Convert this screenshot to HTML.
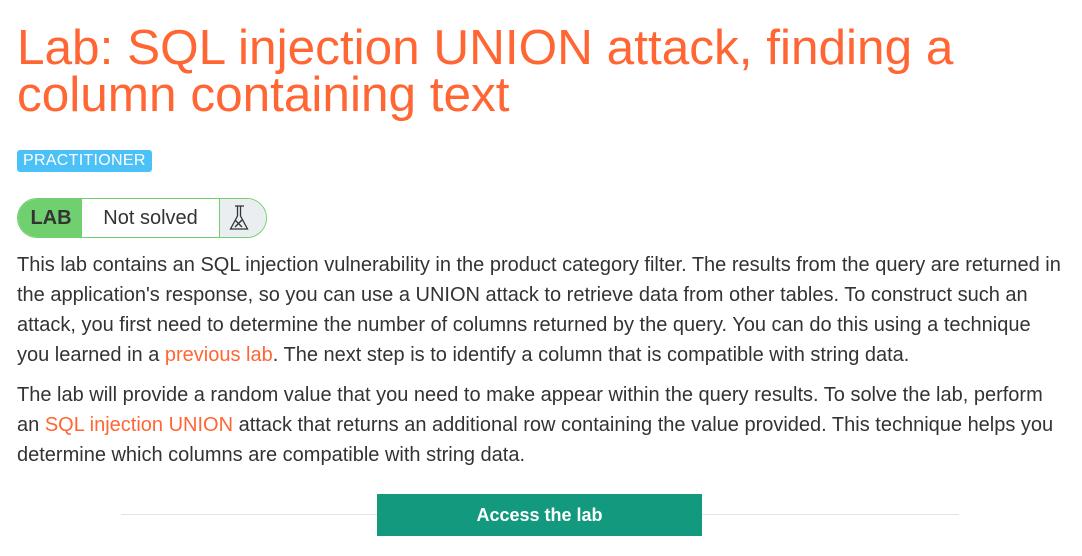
<!DOCTYPE html>
<html><head><style>
body{margin:0;background:#fff;font-family:"Liberation Sans",Arial,sans-serif;width:1082px;height:556px;overflow:hidden;position:relative}
h1{position:absolute;left:17px;top:24px;margin:0;font-weight:normal;color:#ff6633;font-size:49.5px;line-height:47px;width:1000px}
.badge{position:absolute;left:17px;top:150px;background:#4cc1f7;color:#fff;font-size:16px;line-height:22px;padding:0 6px;border-radius:3px;letter-spacing:0.3px}
.lab{position:absolute;left:17px;top:198px;width:248px;height:38px;border:1px solid #70d070;border-radius:20px;overflow:hidden;display:flex;font-size:20px}
.lab .l{background:#70d070;color:#333;font-weight:bold;width:63px;text-align:center;line-height:38px;padding-left:2px}
.lab .m{width:139px;text-align:center;line-height:38px;color:#333;border-right:1px solid #70d070}
.lab .r{flex:1;background:#eaeef0}
p{position:absolute;left:17px;margin:0;font-size:20px;line-height:30px;color:#333;width:1050px}
a{color:#ff6633;text-decoration:none}
.hr{position:absolute;left:121px;top:514px;width:838px;height:1px;background:#e4e4e4}
.btn{position:absolute;left:377px;top:494px;width:325px;height:42px;background:#139a7e;color:#fff;font-weight:bold;font-size:18px;text-align:center;line-height:42px}
</style></head><body>
<h1>Lab: SQL injection UNION attack, finding a column containing text</h1>
<div class="badge">PRACTITIONER</div>
<div class="lab"><div class="l">LAB</div><div class="m">Not solved</div><div class="r">
<svg width="46" height="38" viewBox="0 0 46 38"><path d="M15 7h9M17.5 7v10l-7 13h17l-7-13V7" fill="none" stroke="#333" stroke-width="1.3"/><path d="M15 21l7 7M22 21l-7 7" stroke="#333" stroke-width="1.4"/></svg></div></div>
<p style="top:250px">This lab contains an SQL injection vulnerability in the product category filter. The results from the query are returned in the application's response, so you can use a UNION attack to retrieve data from other tables. To construct such an attack, you first need to determine the number of columns returned by the query. You can do this using a technique you learned in a <a>previous lab</a>. The next step is to identify a column that is compatible with string data.</p>
<p style="top:380px">The lab will provide a random value that you need to make appear within the query results. To solve the lab, perform an <a>SQL injection UNION</a> attack that returns an additional row containing the value provided. This technique helps you determine which columns are compatible with string data.</p>
<div class="hr"></div>
<div class="btn">Access the lab</div>
</body></html>
